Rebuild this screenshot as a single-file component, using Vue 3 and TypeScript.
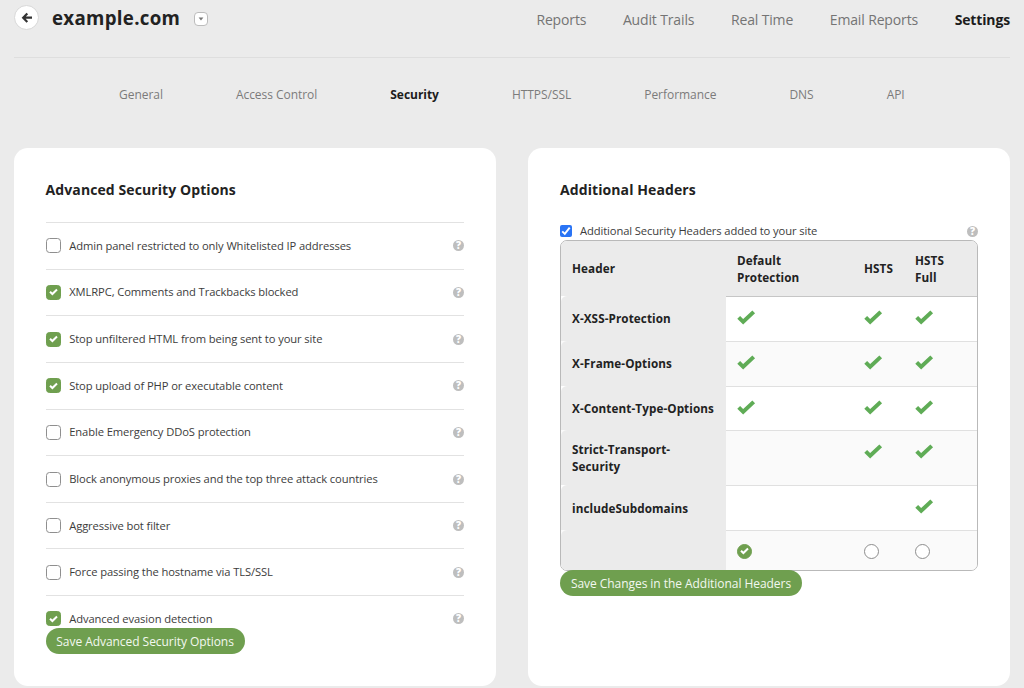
<script setup lang="ts">
interface Option {
  label: string
  checked: boolean
}
interface HeaderRow {
  name: string
  size: string
  marks: boolean[]
}

const mainNav: string[] = ['Reports', 'Audit Trails', 'Real Time', 'Email Reports', 'Settings']
const subNav: string[] = ['General', 'Access Control', 'Security', 'HTTPS/SSL', 'Performance', 'DNS', 'API']

const options: Option[] = [
  { label: 'Admin panel restricted to only Whitelisted IP addresses', checked: false },
  { label: 'XMLRPC, Comments and Trackbacks blocked', checked: true },
  { label: 'Stop unfiltered HTML from being sent to your site', checked: true },
  { label: 'Stop upload of PHP or executable content', checked: true },
  { label: 'Enable Emergency DDoS protection', checked: false },
  { label: 'Block anonymous proxies and the top three attack countries', checked: false },
  { label: 'Aggressive bot filter', checked: false },
  { label: 'Force passing the hostname via TLS/SSL', checked: false },
  { label: 'Advanced evasion detection', checked: true },
]

const headerRows: HeaderRow[] = [
  { name: 'X-XSS-Protection', size: 'normal', marks: [true, true, true] },
  { name: 'X-Frame-Options', size: 'normal', marks: [true, true, true] },
  { name: 'X-Content-Type-Options', size: 'normal', marks: [true, true, true] },
  { name: 'Strict-Transport-Security', size: 'tall', marks: [false, true, true] },
  { name: 'includeSubdomains', size: 'normal', marks: [false, false, true] },
]
</script>

<template>
  <div class="page">
    <header class="top">
      <button class="back" aria-label="Back">
        <svg width="12" height="12" viewBox="0 0 12 12"><path d="M6.3 1.5 2.2 5.7 6.3 9.9M2.4 5.7H11" fill="none" stroke="#333" stroke-width="2.2" /></svg>
      </button>
      <h1>example.com</h1>
      <button class="drop" aria-label="Choose site">
        <svg width="6" height="4" viewBox="0 0 6 4"><path d="M.6.6H5.4L3 3.4Z" fill="#777" /></svg>
      </button>
      <nav class="main-nav">
        <a v-for="item in mainNav" :key="item" :class="{ active: item === 'Settings' }">{{ item }}</a>
      </nav>
    </header>

    <nav class="sub-nav">
      <a v-for="item in subNav" :key="item" :class="{ active: item === 'Security' }">{{ item }}</a>
    </nav>

    <main class="cards">
      <section class="card">
        <h2>Advanced Security Options</h2>
        <ul class="options">
          <li v-for="option in options" :key="option.label">
            <span class="box" :class="{ checked: option.checked }">
              <svg v-if="option.checked" width="9" height="8" viewBox="0 0 9 8"><path d="M1 3.7 3.4 6 8 1.5" fill="none" stroke="#fff" stroke-width="2" /></svg>
            </span>
            <span class="label">{{ option.label }}</span>
            <span class="help">?</span>
          </li>
        </ul>
        <button class="save save-options"><span>Save Advanced Security Options</span></button>
      </section>

      <section class="card">
        <h2>Additional Headers</h2>
        <div class="enable">
          <span class="native">
            <svg width="12" height="12" viewBox="0 0 12 12"><path d="M2.2 6.3 4.8 8.9 9.7 2.6" fill="none" stroke="#fff" stroke-width="1.9" /></svg>
          </span>
          <span class="label">Additional Security Headers added to your site</span>
          <span class="help">?</span>
        </div>
        <div class="table">
          <div class="row head">
            <div class="cell">Header</div>
            <div class="cell">Default<br />Protection</div>
            <div class="cell">HSTS</div>
            <div class="cell">HSTS<br />Full</div>
          </div>
          <div v-for="row in headerRows" :key="row.name" class="row" :class="row.size">
            <div class="cell name"><span>{{ row.name }}</span></div>
            <div v-for="(mark, i) in row.marks" :key="i" class="cell mark">
              <svg v-if="mark" width="19" height="15" viewBox="0 0 19 15"><path d="M1.7 7.3 6.2 11.8 16.7 1.9" fill="none" stroke="#5fac56" stroke-width="4" /></svg>
            </div>
          </div>
          <div class="row pick">
            <div class="cell name"></div>
            <div class="cell">
              <span class="radio checked">
                <svg width="9" height="8" viewBox="0 0 9 8"><path d="M1 3.7 3.4 6 8 1.5" fill="none" stroke="#fff" stroke-width="2" /></svg>
              </span>
            </div>
            <div class="cell"><span class="radio"></span></div>
            <div class="cell"><span class="radio"></span></div>
          </div>
        </div>
        <button class="save save-headers"><span>Save Changes in the Additional Headers</span></button>
      </section>
    </main>
  </div>
</template>

<style>
body {
  background: #ebebeb;
}
</style>

<style scoped>
.page {
  width: 1024px;
  height: 688px;
  overflow: hidden;
  box-sizing: border-box;
  padding: 0 14px;
  background: #ebebeb;
  font-family: "Open Sans", "Noto Sans", sans-serif;
  color: #222;
}
.page * {
  box-sizing: border-box;
}
button {
  font-family: inherit;
  padding: 0;
  margin: 0;
}
svg {
  display: block;
}
.top {
  display: flex;
  height: 58px;
  border-bottom: 1px solid #dedede;
}
.back {
  width: 25px;
  height: 25px;
  margin-top: 5px;
  border: 1px solid #d8d8d8;
  border-radius: 50%;
  background: #fff;
  display: flex;
  align-items: center;
  justify-content: center;
}
h1 {
  margin: 4px 0 0 13px;
  width: 142px;
  font-size: 18.7px;
  letter-spacing: 0.3px;
  line-height: 27px;
  font-weight: 700;
  white-space: nowrap;
}
.drop {
  width: 14px;
  height: 14px;
  margin-top: 12px;
  border: 1px solid #bcbcbc;
  border-radius: 4px;
  background: #fff;
  display: flex;
  align-items: center;
  justify-content: center;
}
.main-nav {
  margin-left: auto;
  margin-top: 10px;
  display: flex;
  gap: 36.6px;
  font-size: 14px;
  letter-spacing: -0.14px;
  line-height: 20px;
  color: #747474;
}
.sub-nav {
  display: flex;
  gap: 73px;
  padding: 28px 0 0 105px;
  height: 90px;
  font-size: 12px;
  letter-spacing: -0.04px;
  line-height: 18px;
  color: #7b7b7b;
}
.active {
  font-weight: 700;
  color: #1c1c1c;
}
.cards {
  display: grid;
  grid-template-columns: 482px 482px;
  gap: 32px;
}
.card {
  height: 538px;
  padding: 31px 32px 0;
  border-radius: 14px;
  background: #fff;
}
.card:first-child {
  padding-left: 31.6px;
}
h2 {
  margin: 0;
  font-size: 14px;
  letter-spacing: 0.09px;
  line-height: 22px;
  font-weight: 700;
}
.options {
  list-style: none;
  margin: 21px 0 0;
  padding: 0;
}
.options li {
  display: flex;
  align-items: center;
  height: 46.65px;
  border-top: 1px solid #e2e2e2;
}
.options li:last-child {
  height: 33px;
  align-items: flex-start;
  padding-top: 15px;
}
.options li:last-child .label {
  line-height: 16px;
}
.options li:last-child .help {
  margin-top: 2px;
}
.box {
  width: 15px;
  height: 15px;
  flex: none;
  border: 1px solid #8f8f8f;
  border-radius: 3.5px;
  margin-right: 8.6px;
  display: flex;
  align-items: center;
  justify-content: center;
}
.box.checked,
.radio.checked {
  border-color: #6f9f4f;
  background: #6f9f4f;
}
.label {
  font-size: 11.2px;
  letter-spacing: -0.1px;
  line-height: 16px;
  color: #3c3c3c;
  white-space: nowrap;
}
.help {
  margin-left: auto;
  width: 11px;
  height: 11px;
  border-radius: 50%;
  background: #bebebe;
  color: #fff;
  font-size: 10px;
  line-height: 11px;
  font-weight: 800;
  text-align: center;
}
.save {
  display: flex;
  align-items: center;
  justify-content: center;
  height: 26px;
  border: 0;
  border-radius: 13px;
  background: #6f9f4f;
  color: #f3f8ef;
  font-size: 12px;
  letter-spacing: -0.05px;
  white-space: nowrap;
}
.save-options {
  width: 199px;
}
.save-headers {
  width: 242px;
}
.enable {
  display: flex;
  align-items: center;
  height: 18px;
  margin-top: 21px;
}
.native {
  width: 12px;
  height: 12px;
  margin-right: 8px;
  border-radius: 2px;
  background: #2a74f5;
}
.table {
  height: 330.5px;
  margin-bottom: -0.5px;
  border: 1px solid #b9b9b9;
  border-radius: 7px;
  overflow: hidden;
  font-size: 11.7px;
  letter-spacing: 0.09px;
  line-height: 16.5px;
  font-weight: 700;
}
.row {
  display: grid;
  grid-template-columns: 165px 127px 51px 1fr;
  height: 44.8px;
  background: #fff;
}
.row:nth-child(odd) {
  background: #fafafa;
}
.row.tall {
  height: 55px;
}
.row.head {
  height: 55px;
  background: #ebebeb;
}
.row.head .cell {
  border-top: 0;
}
.row.pick {
  height: 41px;
}
.cell {
  display: flex;
  align-items: center;
  padding-left: 11px;
  border-top: 1px solid #e0e0e0;
}
.head + .row .cell {
  border-top-color: #c6c6c6;
}
.cell.name {
  padding-right: 11px;
  border-top: 0;
  border-radius: 6px 0 0 0;
  background: #ebebeb;
}
.cell.mark {
  align-items: flex-start;
  padding-top: 13px;
}
.radio {
  width: 15px;
  height: 15px;
  border: 1px solid #8d8d8d;
  border-radius: 50%;
  background: #fff;
  display: flex;
  align-items: center;
  justify-content: center;
}
</style>
